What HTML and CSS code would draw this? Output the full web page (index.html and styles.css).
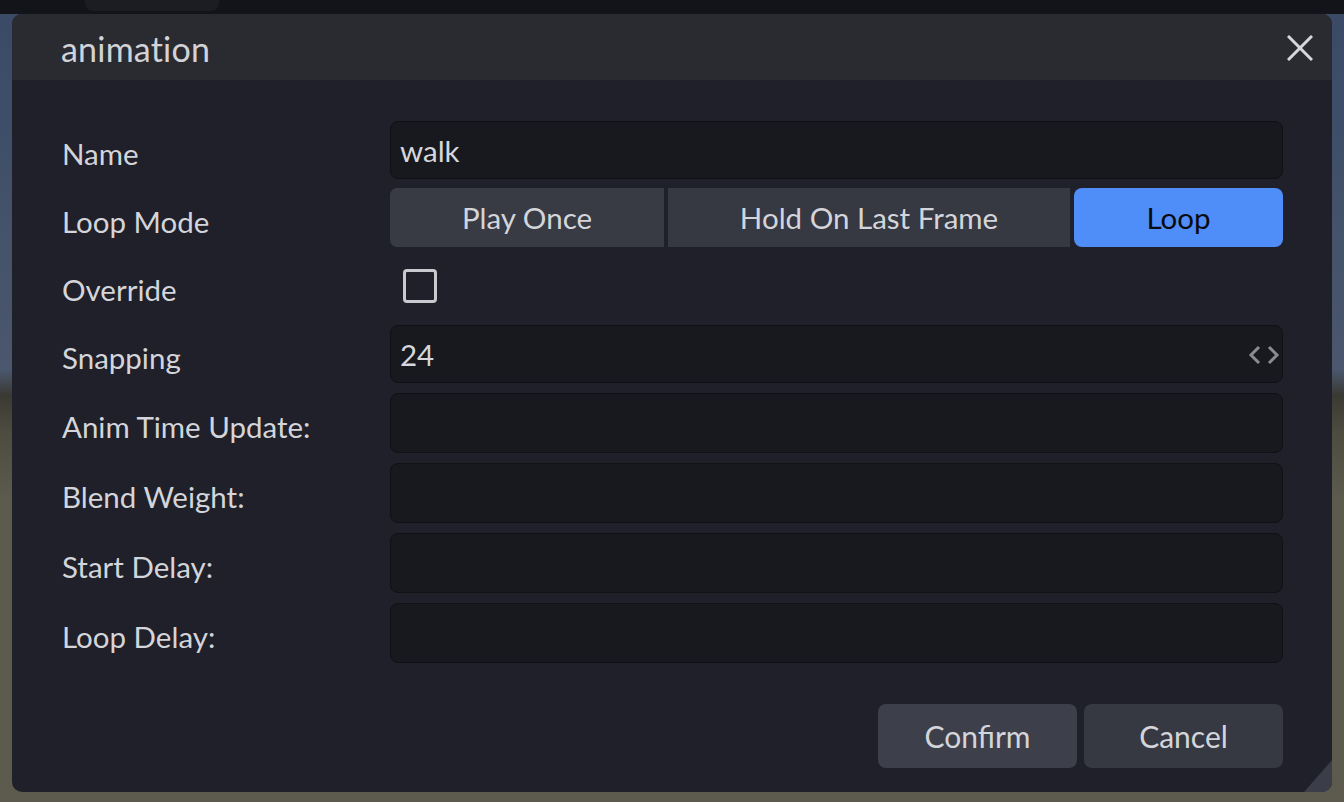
FILE: index.html
```html
<!DOCTYPE html>
<html>
<head>
<meta charset="utf-8">
<link rel="stylesheet" href="styles.css">
</head>
<body>
<div class="topbar"><div class="tab"></div></div>
<div class="scene">
  <div class="dialog">
    <div class="header">
      <span class="title">animation</span>
      <svg class="close" width="26" height="26" viewBox="0 0 26 26"><path d="M1 1 L25 25 M25 1 L1 25" stroke="#d6d7db" stroke-width="3" fill="none"/></svg>
    </div>
    <div class="content">
      <div class="form">
        <div class="label">Name</div>
        <div class="input h58">walk</div>

        <div class="label">Loop Mode</div>
        <div class="seg">
          <div class="segbtn first">Play Once</div>
          <div class="segbtn mid">Hold On Last Frame</div>
          <div class="segbtn active">Loop</div>
        </div>

        <div class="label">Override</div>
        <div class="checkrow"><div class="checkbox"></div></div>

        <div class="label">Snapping</div>
        <div class="input h58 num">24
          <svg class="chev" width="32" height="22" viewBox="0 0 32 22"><path d="M11 3 L3 11 L11 19 M21 3 L29 11 L21 19" stroke="#8b8c92" stroke-width="3" fill="none"/></svg>
        </div>

        <div class="label">Anim Time Update:</div>
        <div class="input"></div>

        <div class="label">Blend Weight:</div>
        <div class="input"></div>

        <div class="label">Start Delay:</div>
        <div class="input"></div>

        <div class="label">Loop Delay:</div>
        <div class="input"></div>
      </div>
      <div class="footer">
        <div class="btn confirm">Confirm</div>
        <div class="btn cancel">Cancel</div>
      </div>
    </div>
    <div class="resize"></div>
  </div>
</div>
</body>
</html>
```
FILE: styles.css
```css
* { box-sizing: border-box; }
html, body { margin: 0; padding: 0; }
body {
  width: 1344px;
  height: 802px;
  overflow: hidden;
  font-family: "Lato", "Noto Sans", sans-serif;
  background: linear-gradient(to bottom, #3a4a66 0px, #4a576d 370px, #3a3a33 395px, #4c4b40 430px, #5c5b4e 500px, #5c5b4e 802px);
  display: flex;
  flex-direction: column;
}
.topbar {
  height: 14px;
  background: #131419;
  position: relative;
  flex: none;
}
.tab {
  position: absolute;
  left: 85px;
  top: 0;
  width: 134px;
  height: 11px;
  background: #1c1d23;
  border-radius: 0 0 8px 8px;
}
.scene {
  padding: 0 12px;
  flex: none;
}
.dialog {
  position: relative;
  height: 778px;
  background: #1f2029;
  border-radius: 10px;
  overflow: hidden;
}
.header {
  height: 66px;
  background: #2a2b31;
  display: flex;
  align-items: center;
  justify-content: space-between;
  padding: 0 19px 0 49px;
}
.title {
  color: #d2d3d8;
  font-size: 34px;
  letter-spacing: 0.2px;
  margin-top: 2px;
}
.close { display: block; margin-top: 2px; }
.content {
  padding: 41px 49px 0 50px;
}
.form {
  display: grid;
  grid-template-columns: 328px 1fr;
  grid-template-rows: 58px 58px 58px 58px 60px 60px 60px 60px;
  row-gap: 10px;
  align-items: center;
}
.label {
  color: #d4d5da;
  font-size: 29.5px;
  padding-top: 6px;
}
.input {
  height: 60px;
  background: #18191e;
  border: 1px solid #101115;
  border-radius: 8px;
  color: #d6d7dc;
  font-size: 29.5px;
  display: flex;
  align-items: center;
  padding-left: 9px;
}
.input.h58 { height: 58px; }
.num { justify-content: space-between; padding-right: 2px; }
.chev { display: block; margin-top: 2px; }
.seg {
  display: flex;
  height: 59px;
  margin-top: -2px;
  gap: 4px;
}
.segbtn {
  display: flex;
  align-items: center;
  justify-content: center;
  font-size: 29.5px;
  color: #d4d5da;
  background: #363842;
}
.segbtn.first { width: 274px; border-radius: 7px 0 0 7px; background: #383a44; }
.segbtn.mid { width: 402px; }
.segbtn.active { flex: 1; background: #4f8ef8; color: #0a0b10; border-radius: 8px; }
.checkrow {
  height: 58px;
  display: flex;
  align-items: center;
  padding-left: 13px;
}
.checkbox {
  width: 34px;
  height: 34px;
  border: 3px solid #c9cacf;
  border-radius: 4px;
}
.footer {
  display: flex;
  justify-content: flex-end;
  gap: 7px;
  margin-top: 41px;
}
.btn {
  width: 199px;
  height: 64px;
  border-radius: 8px;
  display: flex;
  align-items: center;
  justify-content: center;
  font-size: 30px;
  color: #d4d5da;
}
.confirm { background: #3d3f4a; }
.cancel { background: #363842; }
.resize {
  position: absolute;
  right: 0;
  bottom: 0;
  width: 0;
  height: 0;
  border-style: solid;
  border-width: 0 0 32px 28px;
  border-color: transparent transparent #3b3d48 transparent;
}
```
